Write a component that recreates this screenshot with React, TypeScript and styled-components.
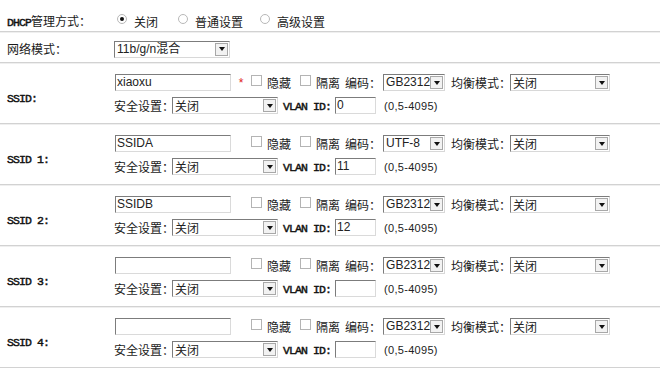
import React from 'react';
import styled, { createGlobalStyle } from 'styled-components';

const GlobalStyle = createGlobalStyle`
  body {
    margin: 0;
    background: #ffffff;
    color: #1a1a1a;
    font-family: "Noto Sans CJK SC", "Liberation Sans", sans-serif;
    font-size: 12px;
  }
`;

const Page = styled.div`
  width: 660px;
`;

const Row = styled.div<{ $h: number; $pt: number }>`
  display: grid;
  grid-template-columns: 114px 1fr;
  align-items: center;
  height: ${(p) => p.$h}px;
  padding-top: ${(p) => p.$pt}px;
  box-sizing: border-box;
  border-bottom: 1px solid #d2d2d2;
  box-shadow: 0 1px 0 #efefef;
`;

const Label = styled.div<{ $shift?: number }>`
  padding-left: 7px;
  padding-top: ${(p) => p.$shift || 0}px;
  font-size: 12px;
  white-space: nowrap;
  line-height: 14px;
`;

const Mono = styled.span`
  font-family: "Liberation Mono", "DejaVu Sans Mono", monospace;
  font-size: 11.5px;
  font-weight: 400;
  letter-spacing: -0.9px;
  color: #111;
  -webkit-text-stroke: 0.45px #111;
`;

const Cell = styled.div`
  display: flex;
  align-items: center;
`;

const Stack = styled.div`
  display: flex;
  flex-direction: column;
  gap: 6px;
  align-self: start;
  padding-top: 11px;
`;

const Line = styled.div`
  display: flex;
  align-items: center;
  height: 17px;
`;

const Text = styled.span<{ $ml?: number }>`
  margin-left: ${(p) => p.$ml || 0}px;
  white-space: nowrap;
  line-height: 17px;
`;

const Radio = styled.span<{ $on?: boolean; $ml?: number }>`
  position: relative;
  width: 8px;
  height: 8px;
  margin-left: ${(p) => p.$ml || 0}px;
  margin-right: 5px;
  margin-top: -6px;
  border: 1px solid #b8b8b8;
  border-radius: 50%;
  background: #fff;
  &::after {
    content: '';
    display: ${(p) => (p.$on ? 'block' : 'none')};
    position: absolute;
    left: 2px;
    top: 2px;
    width: 4px;
    height: 4px;
    border-radius: 50%;
    background: #111;
  }
`;

const Check = styled.span<{ $ml?: number }>`
  align-self: flex-start;
  width: 9px;
  height: 9px;
  margin-top: 1px;
  margin-left: ${(p) => p.$ml || 0}px;
  border: 1px solid #b4b4b4;
  background: #fff;
`;

const Star = styled.span<{ $show?: boolean }>`
  width: 20px;
  text-align: center;
  color: #e02020;
  font-family: "Liberation Sans", sans-serif;
  font-size: 12px;
  visibility: ${(p) => (p.$show ? 'visible' : 'hidden')};
`;

const TextInput = styled.div<{ $w: number; $ml?: number }>`
  width: ${(p) => p.$w}px;
  height: 17px;
  margin-left: ${(p) => p.$ml || 0}px;
  box-sizing: border-box;
  border: 1px solid;
  border-color: #7c7c7c #dadada #dadada #7c7c7c;
  padding-left: 1px;
  font-family: "Liberation Sans", Arial, sans-serif;
  font-size: 12px;
  line-height: 15px;
  color: #222;
  overflow: hidden;
  white-space: nowrap;
`;

const SelectBox = styled.div<{ $w: number; $ml?: number }>`
  display: flex;
  align-items: center;
  width: ${(p) => p.$w}px;
  height: 17px;
  margin-left: ${(p) => p.$ml || 0}px;
  box-sizing: border-box;
  border: 1px solid;
  border-color: #7c7c7c #d8d8d8 #d8d8d8 #7c7c7c;
  background: #fff;
`;

const SelectValue = styled.span<{ $latin?: boolean }>`
  flex: 1;
  padding-left: 2px;
  overflow: hidden;
  white-space: nowrap;
  font-family: ${(p) =>
    p.$latin
      ? '"Liberation Sans", Arial, "Noto Sans CJK SC", sans-serif'
      : '"Noto Sans CJK SC", sans-serif'};
  font-size: 12px;
  line-height: 15px;
  color: #222;
`;

const SelectArrow = styled.span`
  display: flex;
  align-items: center;
  justify-content: center;
  width: 13px;
  height: 13px;
  margin-right: 1px;
  box-sizing: border-box;
  border: 1px solid #a8a8a8;
  background: #f2f2f2;
  &::after {
    content: '';
    border-left: 3px solid transparent;
    border-right: 3px solid transparent;
    border-top: 4px solid #111;
  }
`;

const Range = styled.span`
  margin-left: 8px;
  font-family: "Liberation Sans", Arial, sans-serif;
  font-size: 11px;
  letter-spacing: 0.3px;
  color: #222;
`;

interface Ssid {
  label: string;
  name: string;
  required?: boolean;
  encoding: string;
  vlan: string;
}

const ssids: Ssid[] = [
  { label: 'SSID:', name: 'xiaoxu', required: true, encoding: 'GB2312', vlan: '0' },
  { label: 'SSID 1:', name: 'SSIDA', encoding: 'UTF-8', vlan: '11' },
  { label: 'SSID 2:', name: 'SSIDB', encoding: 'GB2312', vlan: '12' },
  { label: 'SSID 3:', name: '', encoding: 'GB2312', vlan: '' },
  { label: 'SSID 4:', name: '', encoding: 'GB2312', vlan: '' },
];

const Select: React.FC<{ w: number; ml?: number; value: string; latin?: boolean }> = ({
  w,
  ml,
  value,
  latin,
}) => (
  <SelectBox $w={w} $ml={ml}>
    <SelectValue $latin={latin}>{value}</SelectValue>
    <SelectArrow />
  </SelectBox>
);

const SsidRow: React.FC<{ s: Ssid }> = ({ s }) => (
  <Row $h={61} $pt={0}>
    <Label $shift={9}>
      <Mono>{s.label}</Mono>
    </Label>
    <Stack>
      <Line>
        <TextInput $w={116} $ml={1}>{s.name}</TextInput>
        <Star $show={s.required}>*</Star>
        <Check />
        <Text $ml={5}>隐藏</Text>
        <Check $ml={9} />
        <Text $ml={5}>隔离</Text>
        <Text $ml={5}>编码：</Text>
        <Select w={62} ml={2} value={s.encoding} latin />
        <Text $ml={6}>均衡模式：</Text>
        <Select w={100} ml={-1} value="关闭" />
      </Line>
      <Line>
        <Text>安全设置：</Text>
        <Select w={106} ml={-2} value="关闭" />
        <Text $ml={5}>
          <Mono>VLAN ID:</Mono>
        </Text>
        <TextInput $w={41} $ml={4}>{s.vlan}</TextInput>
        <Range>(0,5-4095)</Range>
      </Line>
    </Stack>
  </Row>
);

export default function App() {
  return (
    <Page>
      <GlobalStyle />
      <Row $h={32} $pt={12}>
        <Label>
          <Mono>DHCP</Mono>管理方式：
        </Label>
        <Cell>
          <Radio $on $ml={3} />
          <Text $ml={2}>关闭</Text>
          <Radio $ml={20} />
          <Text $ml={2}>普通设置</Text>
          <Radio $ml={17} />
          <Text $ml={2}>高级设置</Text>
        </Cell>
      </Row>
      <Row $h={31} $pt={4}>
        <Label>网络模式：</Label>
        <Cell>
          <Select w={116} value="11b/g/n混合" latin />
        </Cell>
      </Row>
      {ssids.map((s) => (
        <SsidRow key={s.label} s={s} />
      ))}
    </Page>
  );
}
